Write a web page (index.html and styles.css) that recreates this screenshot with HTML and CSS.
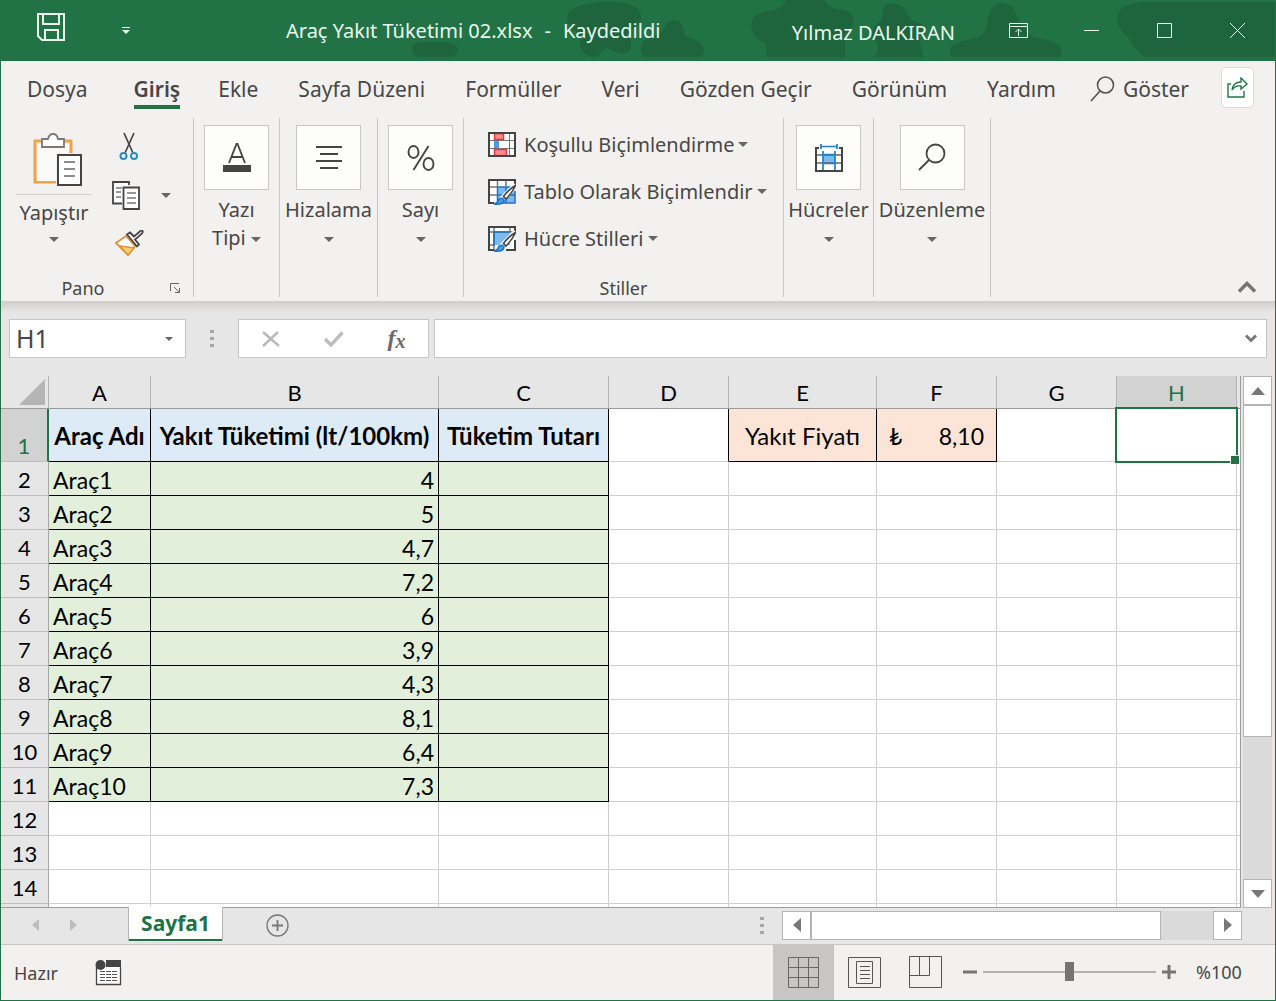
FILE: index.html
```html
<!DOCTYPE html>
<html lang="tr">
<head>
<meta charset="utf-8">
<meta name="viewport" content="width=device-width, initial-scale=1">
<title>Araç Yakıt Tüketimi 02.xlsx</title>
<link rel="stylesheet" href="styles.css">
</head>
<body>
<div class="window">
  <header class="titlebar">
    <svg class="clouds" width="866" height="61" viewBox="410 0 866 61" fill="#1e643d" aria-hidden="true">
      <path d="M424 42h23q11 2 11 8t-9 7h-26q-11-1-11-8t12-7z"/>
      <path d="M582 5q27-7 49 0 11 4 10 13-2 8-10 12v18q-3 7-12 5-8-2-12-6-4 4-8 8-6 4-12 0-7-3-7-14V33q-12-5-13-14-1-9 15-14z"/>
      <path d="M675 20q8 1 9 12 0 5 5 6 15 3 15 13 0 6-8 6h-50q-6-2-5-9 1-9 13-12 9-3 11-10 3-6 10-6z"/>
      <path d="M786 0h38q4 9 16 9 12 2 13 10 1 7-4 11-4 3-4 8v19h-79V44q-14-6-15-18 0-12 16-15 16-1 19-11z"/>
      <path d="M891 3q12 0 16 10 4 9 12 10 7 2 5 8-6 5-4 10 2 8 3 16h-48q5-9 1-16-5-3-4-9 2-8 10-12 0-17 9-17z"/>
      <path d="M1002 3q9 0 13 9 7 19 20 26 22 2 26 11 1 5-2 8h-107q-5-6 1-12 8-5 20-6 12-3 14-14 2-22 15-22z"/>
      <path d="M1142 2h134v55h-132q-9-7-16-20-14-11-10-23 5-11 24-12z"/>
    </svg>
    <button class="save" aria-label="Kaydet"><svg width="29" height="29" viewBox="0 0 29 29" fill="none" stroke="#e9f7ee" stroke-width="2"><path d="M1 1h26v26H5l-4-4zM6 1v10h16V1M8 27V17h13v10"/></svg></button>
    <button class="quick" aria-label="Hızlı erişim"><svg width="10" height="8" viewBox="0 0 10 8" fill="#e9f7ee"><path d="M1 0h8v1H1zM1 3h8L5 7z"/></svg></button>
    <h1 class="doc"><span>Araç Yakıt Tüketimi 02.xlsx</span><span>-</span><span>Kaydedildi</span></h1>
    <span class="user">Yılmaz DALKIRAN</span>
    <div class="winbtns">
      <button aria-label="Şerit görüntüleme"><svg width="19" height="15" viewBox="0 0 19 15" fill="none" stroke="#e9f7ee"><path d="M.5.500h18v14H.5zM.5 3.500h18M9.500 13V6M6.500 9l3-3 3 3"/></svg></button>
      <button aria-label="Simge durumuna küçült"><svg width="15" height="15" viewBox="0 0 15 15" stroke="#e9f7ee"><path d="M0 7.500h15"/></svg></button>
      <button aria-label="Ekranı kapla"><svg width="15" height="15" viewBox="0 0 15 15" fill="none" stroke="#e9f7ee"><path d="M.5.500h14v14H.5z"/></svg></button>
      <button aria-label="Kapat"><svg width="15" height="15" viewBox="0 0 15 15" stroke="#e9f7ee"><path d="M0 0l15 15M15 0L0 15"/></svg></button>
    </div>
  </header>

  <nav class="tabs">
    <a class="file" href="#dosya">Dosya</a>
    <a class="active" href="#giris">Giriş</a>
    <a href="#ekle">Ekle</a>
    <a href="#sayfa-duzeni">Sayfa Düzeni</a>
    <a href="#formuller">Formüller</a>
    <a href="#veri">Veri</a>
    <a href="#gozden-gecir">Gözden Geçir</a>
    <a href="#gorunum">Görünüm</a>
    <a href="#yardim">Yardım</a>
    <button class="tell"><svg width="25" height="26" viewBox="0 0 25 26" fill="none" stroke="#555250" stroke-width="1.600"><circle cx="15.500" cy="9" r="8"/><path d="M10 15L1 25"/></svg>Göster</button>
    <button class="share" aria-label="Paylaş"><svg width="21" height="21" viewBox="0 0 21 21" fill="none" stroke="#217346" stroke-width="1.400"><path d="M4 7H1v13h16v-6"/><path d="M5 13q1-8 9-8V1l6 6-6 5V9q-6-1-9 4z"/></svg></button>
  </nav>

  <div class="ribbon">
    <section class="group clipboard">
      <div class="cliptools">
        <button class="paste">
          <svg width="50" height="54" viewBox="0 0 50 54" fill="none">
            <path d="M9 8H2v41h21M30 8h8v12" stroke="#eda447" stroke-width="3"/><path d="M4 10h32v10H23v28H4z" fill="#faf9f8"/>
            <path d="M9 6h6q1-5 5-5t5 5h6v8H9z" fill="#fff" stroke="#7b7977" stroke-width="1.800"/>
            <path d="M25 22h23v30H25z" fill="#fff" stroke="#444" stroke-width="2"/><path d="M31 29h11M31 36h11M31 43h11" stroke="#666" stroke-width="1.600"/>
          </svg>
          <span class="pastelabel">Yapıştır</span><i class="caret"></i>
        </button>
        <div class="cliprow">
          <button aria-label="Kes"><svg width="20" height="30" viewBox="0 0 20 30" fill="none"><path d="M5 2l9 20M15 2L6 22" stroke="#444" stroke-width="1.700"/><circle cx="4.500" cy="25" r="3" stroke="#2e8bc0" stroke-width="2"/><circle cx="15" cy="25" r="3" stroke="#2e8bc0" stroke-width="2"/></svg></button>
          <button class="copy" aria-label="Kopyala"><svg width="28" height="29" viewBox="0 0 28 29" fill="#fff" stroke="#444" stroke-width="1.800"><path d="M10 22.500H1V1h16v3"/><path d="M11.500 6.500H27V28H11.500z"/><path d="M4 7h6M4 11h5M4 16h5M15 12h9M15 17h9M15 22h9" stroke="#777" stroke-width="1.400"/></svg></button>
          <button aria-label="Biçim Boyacısı"><svg width="29" height="27" viewBox="0 0 29 27"><path d="M11 6L1 13l12 12 7-9z" fill="#fff" stroke="#e0913a" stroke-width="1.800"/><path d="M5 16l14 2-6 7z" fill="#f9d26b" stroke="#e0913a" stroke-width="1.500"/><path d="M12 4.500l10 12 2-2-4-5 7-6q2-3-1-3l-7 6-4-4z" fill="#fff" stroke="#444" stroke-width="1.800"/></svg></button>
        </div>
        <button class="copymore" aria-label="Kopyala seçenekleri"><i class="caret"></i></button>
      </div>
      <footer>Pano<button class="launcher" aria-label="Pano ayarları"><svg width="11" height="10" viewBox="0 0 11 10" fill="none" stroke="#666"><path d="M.5 8V.500H9M4 4l5 5M9.500 5v4.500H5"/></svg></button></footer>
    </section>
    <section class="group font"><button class="big"><span class="tile"><svg width="28" height="30" viewBox="0 0 28 30"><path d="M6 20L13.500 1h1L22 20M8.500 14h11" fill="none" stroke="#444" stroke-width="1.800"/><path d="M0 22h28v7H0z" fill="#444"/></svg></span><span>Yazı<br>Tipi <i class="caret"></i></span></button></section>
    <section class="group align"><button class="big"><span class="tile"><svg width="26" height="24" viewBox="0 0 26 24" stroke="#444" stroke-width="2"><path d="M0 1h26M4 8h18M0 15h26M4 22h18"/></svg></span><span>Hizalama<br><i class="caret"></i></span></button></section>
    <section class="group number"><button class="big"><span class="tile"><svg width="28" height="26" viewBox="0 0 28 26" fill="none" stroke="#444" stroke-width="1.900"><ellipse cx="6.500" cy="7" rx="5" ry="6"/><ellipse cx="21.500" cy="19" rx="5" ry="6"/><path d="M21.500 1L6.500 25"/></svg></span><span>Sayı<br><i class="caret"></i></span></button></section>
    <section class="group styles">
      <div class="stylelist">
        <button><svg width="28" height="26" viewBox="0 0 28 26" fill="none"><path d="M1 1h26v23H1z" fill="#fff"/><path d="M1 8.500h26M1 16.500h26M6.500 1v23M21.500 1v23" stroke="#777"/><path d="M6.500 1.500h9v6h-9zM6.500 17.500h12v6h-12z" fill="#fd8a8a" stroke="#e03a3e" stroke-width="1.500"/><path d="M6 9h5v7H6z" fill="#4a9be0"/><path d="M1 1h26v23H1z" stroke="#444" stroke-width="2"/></svg>Koşullu Biçimlendirme <i class="caret"></i></button>
        <button><svg width="28" height="26" viewBox="0 0 28 26" fill="none"><path d="M1 24V1h26v23z" fill="#fff"/><path d="M9 8h18v16H9z" fill="#7cb9ee"/><path d="M9.500 24V8H27M18 8v16M9 16h18M27 12v12H9" stroke="#1b74c5" stroke-width="1.500"/><path d="M1 8h8M1 16h8M9.500 1v7M18 1v7" stroke="#777" stroke-width="1.500"/><path d="M1 25V1h26v5M1 24h5" stroke="#444" stroke-width="2"/><path d="M28 6L13 21" stroke="#f3f1ef" stroke-width="6"/><path d="M27.500 6.500q-7 4-12 11l2.500 2.500q6-6 9.500-13.500z" fill="#fff" stroke="#444" stroke-width="1.600"/><path d="M6 25q4-1 5-5 3-2 5 1 0 5-10 4z" fill="#4a9be0" stroke="#1b74c5" stroke-width="1.500"/></svg>Tablo Olarak Biçimlendir <i class="caret"></i></button>
        <button><svg width="28" height="26" viewBox="0 0 28 26" fill="none"><path d="M1 24V1h26v23z" fill="#fff"/><path d="M6 6h16v13H6z" fill="#7cb9ee"/><path d="M1 6h26M6 1v23M22 1v5M1 19h5" stroke="#777" stroke-width="1.500"/><path d="M6 20V6h16" stroke="#1b74c5" stroke-width="1.700"/><path d="M1 25V1h26v5M1 24h5M27 14v10h-9" stroke="#444" stroke-width="2"/><path d="M28 6L13 21" stroke="#f3f1ef" stroke-width="6"/><path d="M27.500 6.500q-7 4-12 11l2.500 2.500q6-6 9.500-13.500z" fill="#fff" stroke="#444" stroke-width="1.600"/><path d="M6 25q4-1 5-5 3-2 5 1 0 5-10 4z" fill="#4a9be0" stroke="#1b74c5" stroke-width="1.500"/></svg>Hücre Stilleri <i class="caret"></i></button>
      </div>
      <footer>Stiller</footer>
    </section>
    <section class="group cells"><button class="big"><span class="tile"><svg width="28" height="29" viewBox="0 0 28 29" fill="none"><path d="M8 11h12v10H8z" fill="#7cb9ee"/><path d="M1 12h26M1 20h26" stroke="#666" stroke-width="1.500"/><path d="M4 5H1v23h26V5h-3" stroke="#444" stroke-width="2"/><path d="M8 8v19M20 8v19M8 11.500h12M8 20.500h12M6 3.500h16M6 1v5M22 1v5" stroke="#2380c0" stroke-width="1.700"/></svg></span><span>Hücreler<br><i class="caret"></i></span></button></section>
    <section class="group editing"><button class="big"><span class="tile"><svg width="28" height="29" viewBox="0 0 28 29" fill="none" stroke="#444" stroke-width="1.800"><circle cx="17.500" cy="10.500" r="9"/><path d="M11 17L1 27"/></svg></span><span>Düzenleme<br><i class="caret"></i></span></button></section>
    <button class="collapse" aria-label="Şeridi daralt"><svg width="18" height="12" viewBox="0 0 18 12" fill="none" stroke="#777371" stroke-width="3.400"><path d="M1 10.500l8-8 8 8"/></svg></button>
  </div>

  <div class="formulabar">
    <div class="namebox"><input aria-label="Ad kutusu" value="H1"><button aria-label="Adlar"><i class="caret small"></i></button></div>
    <i class="dots"></i>
    <div class="fxbtns">
      <button aria-label="İptal"><svg width="18" height="16" viewBox="0 0 18 16" stroke="#b9b9b9" stroke-width="2.400"><path d="M1 1l16 14M16 1L1 15"/></svg></button>
      <button aria-label="Gir"><svg width="20" height="16" viewBox="0 0 20 16" fill="none" stroke="#bdbdbd" stroke-width="3.400"><path d="M1 8l6 6L18.500 1.500"/></svg></button>
      <button class="fx" aria-label="İşlev ekle">f<span>x</span></button>
    </div>
    <div class="formula"><input aria-label="Formül çubuğu"><button aria-label="Genişlet"><svg width="12" height="9" viewBox="0 0 12 9" fill="none" stroke="#777" stroke-width="3"><path d="M1 1.500l5 5 5-5"/></svg></button></div>
  </div>

  <main class="sheet">
    <div class="grid">
      <table>
        <colgroup><col class="w-head"><col class="w-a"><col class="w-b"><col class="w-c"><col class="w-std"><col class="w-e"><col class="w-std"><col class="w-std"><col class="w-std"><col></colgroup>
        <thead><tr><th class="corner"><svg width="27" height="27" viewBox="0 0 27 27" fill="#b5b5b5"><path d="M27 0v26H1z"/></svg></th><th>A</th><th>B</th><th>C</th><th>D</th><th>E</th><th>F</th><th>G</th><th class="on">H</th><th></th></tr></thead>
        <tbody>
          <tr class="first"><th class="on">1</th><td class="title">Araç Adı</td><td class="title">Yakıt Tüketimi (lt/100km)</td><td class="title">Tüketim Tutarı</td><td class="edge"></td><td class="price label">Yakıt Fiyatı</td><td class="price"><div class="money"><span>₺</span><span>8,10</span></div></td><td></td><td class="selected"><i class="cursor"></i></td><td></td></tr>
          <tr><th>2</th><td class="g">Araç1</td><td class="g n">4</td><td class="g"></td><td></td><td></td><td></td><td></td><td></td><td></td></tr>
          <tr><th>3</th><td class="g">Araç2</td><td class="g n">5</td><td class="g"></td><td></td><td></td><td></td><td></td><td></td><td></td></tr>
          <tr><th>4</th><td class="g">Araç3</td><td class="g n">4,7</td><td class="g"></td><td></td><td></td><td></td><td></td><td></td><td></td></tr>
          <tr><th>5</th><td class="g">Araç4</td><td class="g n">7,2</td><td class="g"></td><td></td><td></td><td></td><td></td><td></td><td></td></tr>
          <tr><th>6</th><td class="g">Araç5</td><td class="g n">6</td><td class="g"></td><td></td><td></td><td></td><td></td><td></td><td></td></tr>
          <tr><th>7</th><td class="g">Araç6</td><td class="g n">3,9</td><td class="g"></td><td></td><td></td><td></td><td></td><td></td><td></td></tr>
          <tr><th>8</th><td class="g">Araç7</td><td class="g n">4,3</td><td class="g"></td><td></td><td></td><td></td><td></td><td></td><td></td></tr>
          <tr><th>9</th><td class="g">Araç8</td><td class="g n">8,1</td><td class="g"></td><td></td><td></td><td></td><td></td><td></td><td></td></tr>
          <tr><th>10</th><td class="g">Araç9</td><td class="g n">6,4</td><td class="g"></td><td></td><td></td><td></td><td></td><td></td><td></td></tr>
          <tr><th>11</th><td class="g">Araç10</td><td class="g n">7,3</td><td class="g"></td><td></td><td></td><td></td><td></td><td></td><td></td></tr>
          <tr><th>12</th><td></td><td></td><td></td><td></td><td></td><td></td><td></td><td></td><td></td></tr>
          <tr><th>13</th><td></td><td></td><td></td><td></td><td></td><td></td><td></td><td></td><td></td></tr>
          <tr><th>14</th><td></td><td></td><td></td><td></td><td></td><td></td><td></td><td></td><td></td></tr>
          <tr><th></th><td></td><td></td><td></td><td></td><td></td><td></td><td></td><td></td><td></td></tr>
        </tbody>
      </table>
    </div>
    <div class="scroll vertical">
      <button aria-label="Yukarı"><svg width="14" height="8" viewBox="0 0 14 8" fill="#777"><path d="M0 8l7-8 7 8z"/></svg></button>
      <div class="track"><div class="thumb"></div></div>
      <button aria-label="Aşağı"><svg width="14" height="8" viewBox="0 0 14 8" fill="#777"><path d="M0 0l7 8 7-8z"/></svg></button>
    </div>
  </main>

  <div class="sheetbar">
    <div class="sheetnav">
      <button aria-label="Önceki sayfa"><svg width="7" height="12" viewBox="0 0 7 12" fill="#bdbdbd"><path d="M7 0v12L0 6z"/></svg></button>
      <button aria-label="Sonraki sayfa"><svg width="7" height="12" viewBox="0 0 7 12" fill="#bdbdbd"><path d="M0 0v12l7-6z"/></svg></button>
    </div>
    <button class="sheettab">Sayfa1</button>
    <button class="addsheet" aria-label="Yeni sayfa"><svg width="23" height="23" viewBox="0 0 23 23" fill="none" stroke="#777" stroke-width="1.300"><circle cx="11.500" cy="11.500" r="10.500"/><path d="M6 11.500h11M11.500 6v11" stroke-width="1.800"/></svg></button>
    <i class="dots"></i>
    <div class="scroll horizontal">
      <button aria-label="Sola"><svg width="8" height="14" viewBox="0 0 8 14" fill="#777"><path d="M8 0v14L0 7z"/></svg></button>
      <div class="track"><div class="thumb"></div></div>
      <button aria-label="Sağa"><svg width="8" height="14" viewBox="0 0 8 14" fill="#777"><path d="M0 0v14l8-7z"/></svg></button>
    </div>
  </div>

  <footer class="status">
    <span class="ready">Hazır</span>
    <button class="macro" aria-label="Makro kaydet"><svg width="27" height="26" viewBox="0 0 27 26" fill="none"><path d="M1.500 7v17.500h24V7" fill="#fff" stroke="#444" stroke-width="1.300"/><path d="M11 0h15v7H11z" fill="#444"/><circle cx="5.500" cy="5" r="5" fill="#444"/><path d="M5 11.500h17M5 14.500h17M5 17.500h17M5 20.500h17" stroke="#555" stroke-dasharray="5 1"/></svg></button>
    <div class="views">
      <button class="on" aria-label="Normal"><svg width="31" height="31" viewBox="0 0 31 31" fill="none" stroke="#666" stroke-width="1"><path d="M.5.500h30v30H.5zM10.500 0v31M20.500 0v31M0 10.500h31M0 20.500h31"/></svg></button>
      <button aria-label="Sayfa Düzeni"><svg width="33" height="31" viewBox="0 0 33 31" fill="none" stroke="#555"><path d="M.5.500h32v30H.5zM8.500 4.500h16v22h-16zM12 9.500h10M12 13.500h10M12 17.500h10M12 21.500h10"/></svg></button>
      <button aria-label="Sayfa Sonu Önizleme"><svg width="33" height="33" viewBox="0 0 33 33" fill="none" stroke="#555"><path d="M.5.500h32v31H.5zM10.500 0v19M.5 19.500h20V0"/></svg></button>
    </div>
    <div class="zoom">
      <button aria-label="Uzaklaştır"><svg width="14" height="14" viewBox="0 0 14 14" fill="#777371"><path d="M0 5.500h14v3H0z"/></svg></button>
      <input type="range" min="0" max="100" value="50" aria-label="Yakınlaştırma">
      <button aria-label="Yakınlaştır"><svg width="14" height="14" viewBox="0 0 14 14" fill="#777371"><path d="M0 5.500h14v3H0z"/><path d="M5.500 0h3v14h-3z"/></svg></button>
      <span class="percent">%100</span>
    </div>
  </footer>
</div>
</body>
</html>
```
FILE: styles.css
```css
* { box-sizing: border-box; }
body { margin: 0; font-family: "Noto Sans", "Open Sans", sans-serif; color: #484644; }
button, input { font: inherit; color: inherit; border: 0; padding: 0; margin: 0; background: none; outline: 0; }
button { display: flex; align-items: center; justify-content: center; }
svg { display: block; flex: none; }
.window { display: flex; flex-direction: column; height: 100vh; border: 1px solid #217346; border-top: 0; background: #e6e6e6; overflow: hidden; }

.titlebar { position: relative; display: flex; align-items: center; height: 61px; flex: none; background: #217346; color: #e9f7ee; font-size: 20px; }
.titlebar > * { position: relative; }
.titlebar .clouds { position: absolute; right: -1px; top: 0; }
.save { margin: 0 0 6px 36px; }
.quick { margin-left: 55px; }
.doc { display: flex; gap: 12px; margin: 0 0 0 155px; font-size: 20px; font-weight: 400; white-space: nowrap; }
.user { margin-left: auto; padding-top: 4px; white-space: nowrap; }
.winbtns { display: flex; margin: 0 1px 0 27px; }
.winbtns button { width: 73px; height: 59px; }

.tabs { display: flex; flex: none; height: 57px; padding: 0 21px 0 26px; gap: 40px; background: #f3f1ef; font-size: 21px; white-space: nowrap; }
.tabs a { color: inherit; text-decoration: none; height: 48px; line-height: 56px; }
.tabs .file { margin-right: 6px; }
.tabs .active { font-weight: 600; border-bottom: 4px solid #217346; margin-right: -2px; }
.tell { gap: 8px; height: 55px; margin: 0 -10px 0 -6px; }
.share { flex: none; width: 33px; height: 41px; margin: 6px 0 0 auto; background: #fff; border: 1px solid #dddbd9; border-radius: 5px; }

.ribbon { display: flex; flex: none; height: 183px; padding-bottom: 4px; background: #f3f1ef; font-size: 20px; }
.group { display: flex; flex-direction: column; flex: none; border-right: 1px solid #c8c6c4; white-space: nowrap; }
.group footer { display: flex; align-items: center; justify-content: center; margin-top: auto; height: 18px; font-size: 18px; line-height: 18px; position: relative; }
.clipboard { width: 193px; }
.font, .number { width: 86px; }
.align { width: 98px; }
.styles { width: 320px; }
.cells { width: 90px; }
.editing { width: 117px; }
.caret { display: inline-block; width: 0; height: 0; border: 5px solid transparent; border-top-color: #666; border-bottom: 0; vertical-align: middle; }
.caret.small { border-width: 4px; border-bottom: 0; }
.big { flex-direction: column; margin-top: 7px; gap: 6px; line-height: 28px; }
.tile { display: flex; align-items: center; justify-content: center; width: 65px; height: 65px; background: #fdfdfb; border: 1px solid #c8c6c4; }
.cliptools { display: flex; height: 145px; padding-left: 15px; }
.paste { flex-direction: column; justify-content: flex-start; width: 76px; padding-top: 15px; }
.paste svg { margin-left: 8px; }
.pastelabel { width: 76px; margin-top: 7px; padding-top: 4px; border-top: 1px solid #d2d0ce; line-height: 28px; }
.paste .caret { margin-top: 10px; }
.cliprow { display: flex; flex-direction: column; justify-content: space-between; align-items: center; width: 32px; margin-left: 21px; padding: 13px 0 6px; }
.copy { margin-right: 6px; }
.copymore { width: 42px; padding-top: 10px; }
.clipboard footer { padding-right: 28px; }
.launcher { position: absolute; right: 12px; top: 4px; }
.stylelist { display: flex; flex-direction: column; align-items: flex-start; padding: 3px 0 0 24px; }
.stylelist button { gap: 8px; height: 47px; }
.stylelist .caret { margin-left: -4px; }
.collapse { margin: auto 19px 4px auto; }

.formulabar { display: flex; flex: none; height: 75px; padding: 18px 8px; background: linear-gradient(#cfcdcb, #e6e6e6 11px); }
.namebox, .fxbtns, .formula { display: flex; background: #fff; border: 1px solid #c6c6c6; }
.namebox { width: 177px; padding-left: 6px; font-size: 25px; }
.namebox input { width: 136px; padding-bottom: 2px; }
.namebox button { width: 34px; }
.dots { width: 4px; height: 21px; background: radial-gradient(circle, #a6a6a6 2px, transparent 2px) 0 0 / 4px 7px; align-self: center; }
.formulabar .dots { margin: 0 24px; }
.fxbtns { width: 191px; }
.fxbtns button { flex: 1; }
.fx { font: italic 700 24px "Liberation Serif", serif; color: #6b6b6b; }
.fx span { font-size: 20px; padding-top: 6px; }
.formula { flex: 1; margin-left: 5px; }
.formula input { flex: 1; min-width: 0; font-size: 21px; }
.formula button { width: 30px; }

.sheet { display: flex; flex: 1; min-height: 0; padding-right: 3px; gap: 2px; font-family: Lato, "Noto Sans", sans-serif; font-size: 23px; line-height: 24px; color: #000; }
.grid { flex: 1; min-width: 0; overflow: hidden; border: solid #9b9b9b; border-width: 0 1px 1px 0; background: #fff; }
table { width: 100%; table-layout: fixed; border-collapse: separate; border-spacing: 0; }
.w-head { width: 48px; }
.w-a { width: 102px; }
.w-b { width: 288px; }
.w-c { width: 170px; }
.w-e { width: 148px; }
.w-std { width: 120px; }
th, td { height: 34px; padding: 2px 4px 0; border: solid #d0d0d0; border-width: 0 1px 1px 0; white-space: nowrap; }
th { padding: 2px 0 0; background: #e6e6e6; font-size: 22px; font-weight: 400; border-color: #a6a6a6; }
tbody th { border-bottom-color: #bdbdbd; }
thead th { height: 33px; padding-top: 1px; border-right-color: #b4b4b4; border-bottom-color: #9b9b9b; }
thead th:last-child, td:last-child { border-right: 0; padding: 0; }
.corner svg { margin-left: 17px; }
th.on { background: #d2d2d2; color: #217346; }
.first > * { height: 53px; padding-top: 1px; }
.first th { vertical-align: bottom; padding-bottom: 3px; border-right: 2px solid #217346; }
.title { background: #ddebf7; font-size: 24px; font-weight: 700; text-align: center; padding: 1px 0 0; border-color: #000; }
.g { background: #e2efda; border-color: #000; }
.n { text-align: right; }
.edge { border-right-color: #000; }
.price { background: #fce4d6; border-color: #000; }
.label { font-size: 24px; text-align: center; }
.money { display: flex; justify-content: space-between; padding: 0 8px; }
.selected { position: relative; }
.cursor { position: absolute; inset: -2px; border: 2px solid #217346; }
.cursor::after { content: ""; position: absolute; right: -3px; bottom: -3px; width: 8px; height: 8px; background: #217346; border: solid #fff; border-width: 1px 0 0 1px; }

.scroll { display: flex; background: #dadada; }
.scroll button, .thumb { background: #fff; border: 1px solid #b4b4b4; }
.track { display: flex; flex: 1; }
.vertical { flex-direction: column; width: 29px; }
.vertical button { height: 29px; flex: none; }
.vertical .track { flex-direction: column; }
.vertical .thumb { height: 70%; }
.horizontal { width: 460px; height: 29px; }
.horizontal button { width: 29px; }
.horizontal .thumb { width: 87%; }

.sheetbar { display: flex; flex: none; align-items: center; height: 37px; padding: 0 33px 2px 0; border-bottom: 1px solid #c6c6c6; }
.sheetnav { display: flex; margin-left: 15px; }
.sheetnav button { width: 38px; height: 30px; }
.sheettab { align-self: flex-start; width: 95px; height: 34px; margin: -1px 0 0 36px; padding-bottom: 2px; background: #fff; border: 1px solid #b4b4b4; border-width: 0 1px; box-shadow: inset 0 -2px #217346; font-size: 21px; font-weight: 700; color: #217346; position: relative; }
.addsheet { margin-left: 43px; }
.sheetbar .dots { margin: 0 18px 0 auto; }

.status { display: flex; flex: none; align-items: center; height: 55px; background: #f3f1ef; font-size: 18px; }
.ready { padding-left: 13px; }
.macro { margin-left: 37px; }
.views { display: flex; align-self: stretch; margin-left: auto; }
.views button { width: 61px; }
.views .on { background: #c8c6c4; }
.zoom { display: flex; align-items: center; margin-left: 7px; padding: 0 32px 2px 0; }
.zoom input { appearance: none; width: 173px; height: 20px; margin: 0 6px; background: linear-gradient(#b3b0ad, #b3b0ad) center / 100% 2px no-repeat; }
.zoom input::-webkit-slider-thumb { appearance: none; width: 9px; height: 19px; background: #777371; }
.percent { width: 47px; margin-left: 20px; }
```
